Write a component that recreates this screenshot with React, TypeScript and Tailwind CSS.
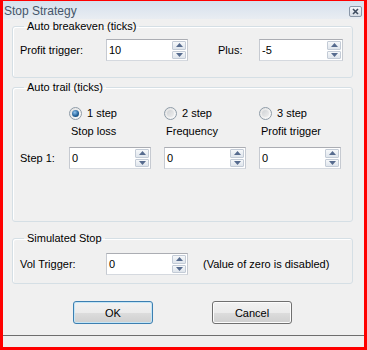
import React from "react";

function Spin({ value, w }: { value: string; w: number }) {
  return (
    <div
      className="relative h-[22px] border border-[#abadb3] border-l-[#c6cad1] border-r-[#c6cad1] border-b-[#d5d9df] bg-white flex items-center"
      style={{ width: w }}
    >
      <span className="pl-[2px] text-[11px] leading-[14px] text-black">{value}</span>
      <div className="absolute right-[1px] top-[1px] bottom-[1px] w-[14px] flex flex-col gap-[1px]">
        <div className="flex-1 rounded-[1px] border border-[#c3cbd6] bg-gradient-to-b from-[#f6f8fa] to-[#dfe5ec] flex items-center justify-center">
          <svg width="7" height="4" viewBox="0 0 7 4">
            <path d="M0 4 L3.5 0 L7 4 Z" fill="#566b8e" />
          </svg>
        </div>
        <div className="flex-1 rounded-[1px] border border-[#c3cbd6] bg-gradient-to-b from-[#f6f8fa] to-[#dfe5ec] flex items-center justify-center">
          <svg width="7" height="4" viewBox="0 0 7 4">
            <path d="M0 0 L3.5 4 L7 0 Z" fill="#566b8e" />
          </svg>
        </div>
      </div>
    </div>
  );
}

function Radio({ checked, label }: { checked?: boolean; label: string }) {
  return (
    <div className="flex items-center h-[14px]">
      <div className="w-[13px] h-[13px] rounded-full border border-[#8f9ca8] bg-gradient-to-br from-[#e2e2e2] to-[#fbfbfb] flex items-center justify-center">
        {checked ? (
          <div className="w-[7px] h-[7px] rounded-full bg-[radial-gradient(circle_at_40%_35%,#8fc4f0,#1f5d94_60%,#123f66)]" />
        ) : (
          <div className="w-[7px] h-[7px] rounded-full bg-gradient-to-br from-[#cfd2d5] to-[#eeeeee]" />
        )}
      </div>
      <span className="ml-[5px]">{label}</span>
    </div>
  );
}

function Group({
  title,
  className,
  children,
}: {
  title: string;
  className?: string;
  children: React.ReactNode;
}) {
  return (
    <fieldset
      className={
        "border border-[#d5dfe5] rounded-[3px] px-[7px] shadow-[inset_1px_1px_0_#ffffff] " +
        (className || "")
      }
    >
      <legend className="ml-[4px] px-[3px] leading-[14px]">{title}</legend>
      {children}
    </fieldset>
  );
}

export default function App() {
  return (
    <div
      className="w-[367px] h-[350px] border-[#ff0000] border-l-[3px] border-r-[3px] border-b-[3px] border-t-[1px] bg-[#f0f0f0] flex flex-col text-[11px] text-black overflow-hidden"
      style={{ fontFamily: '"Liberation Sans", Arial, sans-serif' }}
    >
      {/* title bar */}
      <div className="h-[18px] shrink-0 bg-gradient-to-b from-[#d5e0ed] to-[#e9edf2] flex items-center justify-between pl-[1px] pr-[2px]">
        <span className="text-[12px] leading-[14px] text-[#46566a] mt-[1px]">Stop Strategy</span>
        <div className="w-[13px] h-[11px] mt-[2px] border border-[#8a97a8] rounded-[2px] bg-gradient-to-b from-[#f4f6f9] to-[#d6dde6] flex items-center justify-center">
          <svg width="7" height="7" viewBox="0 0 7 7">
            <path d="M1 1 L6 6 M6 1 L1 6" stroke="#3e4c60" strokeWidth="1.6" />
          </svg>
        </div>
      </div>

      <div className="flex flex-col pl-[9px] pr-[11px]">
        <Group title="Auto breakeven (ticks)" className="pt-[6px] pb-[16px]">
          <div className="flex items-center">
            <span className="w-[86px]">Profit trigger:</span>
            <Spin value="10" w={82} />
            <span className="ml-[30px] w-[41px]">Plus:</span>
            <Spin value="-5" w={84} />
          </div>
        </Group>

        <Group title="Auto trail (ticks)" className="mt-[2px] pt-[12px] pb-[52px]">
          <div className="grid grid-cols-[49px_95px_95px_82px] items-center">
            <span />
            <Radio checked label="1 step" />
            <Radio label="2 step" />
            <Radio label="3 step" />

            <span className="mt-[4px]" />
            <span className="mt-[4px] pl-[2px] leading-[14px]">Stop loss</span>
            <span className="mt-[4px] pl-[2px] leading-[14px]">Frequency</span>
            <span className="mt-[4px] pl-[2px] leading-[14px]">Profit trigger</span>

            <span className="mt-[9px]">Step 1:</span>
            <div className="mt-[9px]">
              <Spin value="0" w={82} />
            </div>
            <div className="mt-[9px]">
              <Spin value="0" w={82} />
            </div>
            <div className="mt-[9px]">
              <Spin value="0" w={82} />
            </div>
          </div>
        </Group>

        <Group title="Simulated Stop" className="mt-[9px] pt-[8px] pb-[8px]">
          <div className="flex items-center">
            <span className="w-[86px]">Vol Trigger:</span>
            <Spin value="0" w={82} />
            <span className="ml-[15px]">(Value of zero is disabled)</span>
          </div>
        </Group>

        <div className="flex mt-[17px] pl-[61px] gap-[59px]">
          <button className="w-[80px] h-[23px] rounded-[3px] border border-[#3c7fb1] shadow-[inset_0_0_0_1px_#c4e5f6] bg-[linear-gradient(to_bottom,#f2f2f2_0%,#ebebeb_50%,#dddddd_50%,#cfcfcf_100%)] text-[11px] leading-[14px]">
            OK
          </button>
          <button className="w-[80px] h-[23px] rounded-[3px] border border-[#707070] shadow-[inset_0_0_0_1px_#fcfcfc] bg-[linear-gradient(to_bottom,#f2f2f2_0%,#ebebeb_50%,#dddddd_50%,#cfcfcf_100%)] text-[11px] leading-[14px]">
            Cancel
          </button>
        </div>
      </div>

      <div className="mt-[11px] h-[1px] bg-[#6e6e6e] shrink-0" />
    </div>
  );
}
